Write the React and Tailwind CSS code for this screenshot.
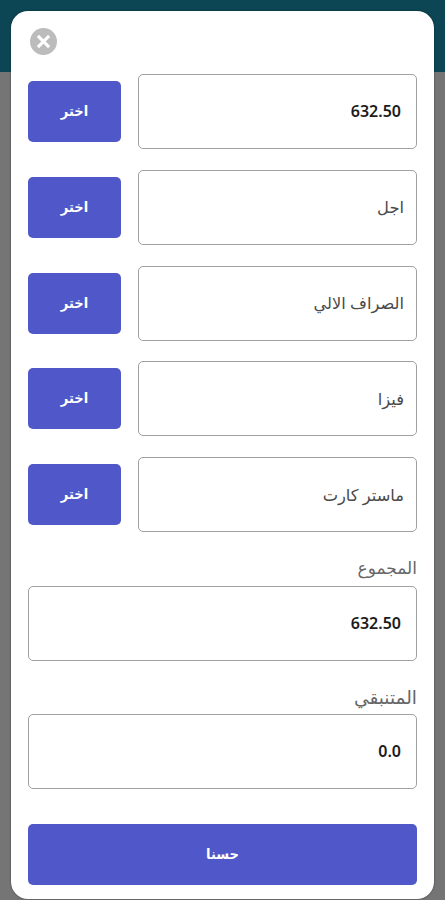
import clsx from 'clsx';

const methods = [
  { id: 'cash', value: '632.50' },
  { id: 'credit', label: 'اجل' },
  { id: 'atm', label: 'الصراف الالي' },
  { id: 'visa', label: 'فيزا' },
  { id: 'mastercard', label: 'ماستر كارت' },
];

function Field({ value, label, className }) {
  return (
    <div
      className={clsx(
        'h-[75px] flex items-center border-[1.5px] border-[#a0a0a0] rounded-[5px]',
        value ? 'pr-[15px] pb-[2px]' : 'pr-3',
        className
      )}
    >
      {value ? (
        <span className="text-[16px] font-semibold leading-6 text-[#1c1c1c]">{value}</span>
      ) : (
        <span className="text-[16.3px] leading-6 text-[#4a4a4a]">{label}</span>
      )}
    </div>
  );
}

function CloseIcon() {
  return (
    <svg className="w-[27px] h-[27px]" viewBox="0 0 27 27" fill="none">
      <circle cx="13.5" cy="13.5" r="13.5" fill="#bcbcbc" />
      <path d="M7.9 7.9L19.1 19.1M19.1 7.9L7.9 19.1" stroke="white" strokeWidth="3" />
    </svg>
  );
}

export default function App() {
  return (
    <div
      dir="rtl"
      className="h-[900px] overflow-hidden bg-linear-to-b from-[#0c4654] from-[72px] to-[#757575] to-[72px] px-[11px] pt-[11px] font-['Noto_Sans','DejaVu_Sans',sans-serif]"
    >
      <div className="h-[888px] bg-white rounded-[17px] px-[17px] pt-[17px] shadow-[0_0_2px_rgba(0,0,0,0.5)]">
        <div className="flex justify-end pl-[2px]">
          <button aria-label="إغلاق">
            <CloseIcon />
          </button>
        </div>

        {/* Payment methods */}
        <div className="mt-[19px] flex flex-col gap-[20.75px]">
          {methods.map((method) => (
            <div key={method.id} className="flex items-center gap-[17px]">
              <Field value={method.value} label={method.label} className="flex-1" />
              <button className="w-[93px] h-[61px] rounded-[5px] bg-[#5058c9] pt-px text-white text-[14.5px] font-bold font-['DejaVu_Sans_Condensed','DejaVu_Sans',sans-serif]">
                اختر
              </button>
            </div>
          ))}
        </div>

        {/* Totals */}
        <p className="mt-[24px] h-[30px] text-[17px] leading-[24px] text-[#666]">المجموع</p>
        <Field value="632.50" />
        <p className="mt-[24px] h-[29px] text-[18.5px] leading-[24px] text-[#666]">المتنبقي</p>
        <Field value="0.0" />

        <button className="mt-[35px] w-full h-[61px] rounded-[5px] bg-[#5058c9] pt-px text-white text-[14.5px] font-bold font-['DejaVu_Sans_Condensed','DejaVu_Sans',sans-serif]">
          حسنا
        </button>
      </div>
    </div>
  );
}
